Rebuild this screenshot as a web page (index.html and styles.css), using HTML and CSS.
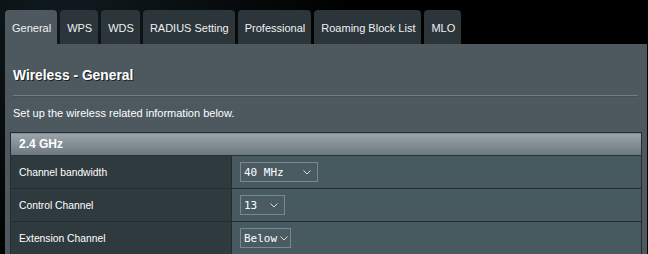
FILE: index.html
```html
<!DOCTYPE html>
<html lang="en">
<head>
    <meta charset="UTF-8">
    <title>Wireless - General</title>
    <link rel="stylesheet" href="styles.css">
</head>
<body>
    <div class="tabs">
        <div class="tab active">General</div>
        <div class="tab">WPS</div>
        <div class="tab">WDS</div>
        <div class="tab">RADIUS Setting</div>
        <div class="tab">Professional</div>
        <div class="tab">Roaming Block List</div>
        <div class="tab">MLO</div>
    </div>

    <div class="panel">
        <h2 class="panel-title">Wireless - General</h2>
        <div class="divider"></div>
        <p class="panel-desc">Set up the wireless related information below.</p>

        <table class="form-table">
            <tr>
                <th colspan="2" class="band-head">2.4 GHz</th>
            </tr>
            <tr>
                <td class="label">Channel bandwidth</td>
                <td class="value">
                    <div class="select w-bw">
                        <span>40 MHz</span>
                        <svg class="chev" width="8" height="5" viewBox="0 0 8 5"><path d="M0.5 0.5 L4 4 L7.5 0.5" fill="none" stroke="#d8dee0" stroke-width="1"/></svg>
                    </div>
                </td>
            </tr>
            <tr>
                <td class="label">Control Channel</td>
                <td class="value">
                    <div class="select w-ch">
                        <span>13</span>
                        <svg class="chev" width="8" height="5" viewBox="0 0 8 5"><path d="M0.5 0.5 L4 4 L7.5 0.5" fill="none" stroke="#d8dee0" stroke-width="1"/></svg>
                    </div>
                </td>
            </tr>
            <tr>
                <td class="label">Extension Channel</td>
                <td class="value">
                    <div class="select w-ext">
                        <span>Below</span>
                        <svg class="chev" width="8" height="5" viewBox="0 0 8 5"><path d="M0.5 0.5 L4 4 L7.5 0.5" fill="none" stroke="#d8dee0" stroke-width="1"/></svg>
                    </div>
                </td>
            </tr>
        </table>
    </div>
</body>
</html>
```

FILE: styles.css
```css
body {
    margin: 0;
    background: radial-gradient(circle at 10% 0%, #101a1e, #000 45%);
    font-family: "Liberation Sans", Arial, sans-serif;
    color: #fff;
    height: 254px;
    overflow: hidden;
}

/* Tabs */
.tabs {
    display: flex;
    gap: 3px;
    padding: 10px 0 0 5px;
}

.tab {
    height: 31px;
    line-height: 31px;
    padding: 3px 6px 0 7px;
    background: #2b353a;
    border-radius: 4px 4px 0 0;
    font-size: 11px;
    color: #eef1f2;
}

.tab.active {
    background: #4d595f;
}

/* Panel */
.panel {
    background: #4d595f;
    margin: 0 1px 0 5px;
    padding: 22px 5px 0 5px;
    height: 210px;
    box-sizing: border-box;
    overflow: hidden;
}

.panel-title {
    margin: 0 3px;
    font-size: 13.8px;
    line-height: 20px;
    font-weight: bold;
    text-shadow: 1px 1px 0 #1b2124;
}

.divider {
    margin: 9px 4px 0 3px;
    height: 1px;
    background: #6f7c82;
    border-bottom: 1px solid #435056;
}

.panel-desc {
    margin: 8px 3px 0 3px;
    font-size: 11px;
    line-height: 16px;
}

/* Form table */
.form-table {
    margin-top: 11px;
    width: 100%;
    border-collapse: collapse;
    border: 1px solid #252c2f;
}

.band-head {
    height: 22px;
    padding: 0 0 0 8px;
    text-align: left;
    font-size: 12px;
    font-weight: bold;
    background: linear-gradient(#9aa6ab, #6b777c);
    border-bottom: 1px solid #2a3235;
}

.form-table td {
    height: 32px;
    padding: 0;
    border-bottom: 1px solid #252c2f;
    font-size: 10.3px;
}

.label {
    width: 212px;
    padding-left: 8px !important;
    background: #2f3a3f;
    border-right: 1px solid #242b2e;
}

.value {
    background: #475a60;
    padding-left: 8px !important;
}

.select {
    display: flex;
    align-items: center;
    justify-content: space-between;
    height: 18px;
    padding: 0 6px 0 3px;
    border: 1px solid #7b898e;
    background: #4a5b61;
    font-family: "DejaVu Sans Mono", monospace;
    font-size: 11px;
    color: #fff;
    box-sizing: content-box;
}

.w-bw { width: 67px; }
.w-ch { width: 34px; }
.w-ext { width: 44px; padding-right: 2px; }

.chev {
    flex: none;
}
```
